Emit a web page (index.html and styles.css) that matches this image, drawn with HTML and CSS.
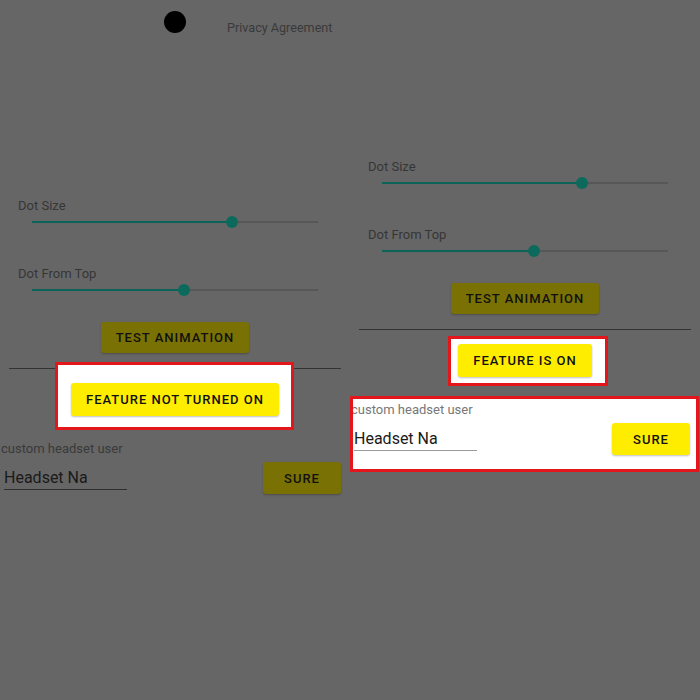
FILE: index.html
```html
<!DOCTYPE html>
<html lang="en">
<head>
    <meta charset="UTF-8">
    <meta name="viewport" content="width=device-width, initial-scale=1.0">
    <title>Headset Feature Comparison</title>
    <link rel="stylesheet" href="styles.css">
</head>
<body>
    <div class="screens">
        <!-- left: feature off -->
        <div class="panel">
            <div class="header">
                <span class="dot"></span>
                <span class="privacy">Privacy Agreement</span>
            </div>

            <div class="label">Dot Size</div>
            <div class="slider">
                <div class="track"><div class="fill" style="width: 70%"><span class="thumb"></span></div></div>
            </div>
            <div class="label label-gap">Dot From Top</div>
            <div class="slider">
                <div class="track"><div class="fill" style="width: 53%"><span class="thumb"></span></div></div>
            </div>

            <div class="btn-row">
                <button class="btn btn-dim">Test Animation</button>
            </div>
            <div class="divider"></div>

            <div class="feature-row">
                <div class="highlight hl-off">
                    <button class="btn btn-yellow">Feature Not Turned On</button>
                </div>
            </div>

            <div class="custom">
                <div class="small-label">custom headset user</div>
                <div class="input-row">
                    <input class="name-input" type="text" value="Headset Na">
                    <button class="btn btn-dim btn-sure">Sure</button>
                </div>
            </div>
        </div>

        <!-- right: feature on -->
        <div class="panel panel-on">
            <div class="label">Dot Size</div>
            <div class="slider">
                <div class="track"><div class="fill" style="width: 70%"><span class="thumb"></span></div></div>
            </div>
            <div class="label label-gap">Dot From Top</div>
            <div class="slider">
                <div class="track"><div class="fill" style="width: 53%"><span class="thumb"></span></div></div>
            </div>

            <div class="btn-row">
                <button class="btn btn-dim">Test Animation</button>
            </div>
            <div class="divider"></div>

            <div class="feature-row">
                <div class="highlight hl-on">
                    <button class="btn btn-yellow">Feature Is On</button>
                </div>
            </div>

            <div class="custom highlight hl-custom">
                <div class="small-label">custom headset user</div>
                <div class="input-row">
                    <input class="name-input" type="text" value="Headset Na">
                    <button class="btn btn-yellow btn-sure">Sure</button>
                </div>
            </div>
        </div>
    </div>
</body>
</html>
```

FILE: styles.css
```css
html, body {
    margin: 0;
    height: 100%;
}
body {
    background-color: #666666;
    font-family: Roboto, 'Liberation Sans', sans-serif;
    color: #363636;
    overflow: hidden;
}
.screens {
    display: flex;
    width: 700px;
}
.panel {
    width: 350px;
    flex: none;
}
.panel-on {
    padding-top: 158px;
}
.header {
    display: flex;
    align-items: flex-start;
    padding: 11px 0 0 164px;
    height: 22px;
    margin-bottom: 164px;
}
.dot {
    width: 22px;
    height: 22px;
    border-radius: 50%;
    background-color: #000;
}
.privacy {
    margin: 9px 0 0 41px;
    font-size: 12.6px;
    line-height: 16px;
    color: #3a3a3a;
}
.label {
    padding-left: 18px;
    font-size: 13px;
    line-height: 18px;
}
.label-gap {
    margin-top: 36px;
}
.slider {
    margin: 0 32px;
    height: 14px;
    display: flex;
    align-items: center;
}
.track {
    flex: 1;
    height: 2px;
    background-color: #575757;
}
.fill {
    position: relative;
    height: 100%;
    background-color: #0b6457;
}
.thumb {
    position: absolute;
    right: -6px;
    top: -5px;
    width: 12px;
    height: 12px;
    border-radius: 50%;
    background-color: #0c6a5c;
}
.btn-row,
.feature-row {
    display: flex;
    justify-content: center;
}
.btn-row {
    margin-top: 25px;
}
.btn {
    font-family: Roboto, 'Liberation Sans', sans-serif;
    font-size: 13px;
    font-weight: 500;
    letter-spacing: 1px;
    text-transform: uppercase;
    color: #111;
    border: none;
    border-radius: 3px;
    height: 31px;
    padding: 0 15px;
    cursor: pointer;
}
.btn-dim {
    background-color: #7a7104;
    box-shadow: 0 1px 2px rgba(0, 0, 0, 0.25);
}
.btn-yellow {
    background-color: #ffed00;
    box-shadow: 0 1px 2px rgba(0, 0, 0, 0.25);
}
.feature-row .btn {
    height: 33px;
}
.divider {
    margin: 15px 9px 0;
    height: 1px;
    background-color: #333;
}
.feature-row {
    margin-top: 14px;
}
.highlight {
    position: relative;
    background-color: #fff;
}
.highlight::after {
    content: "";
    position: absolute;
    inset: 0;
    border: 3px solid #e3161b;
    pointer-events: none;
}
.hl-off {
    margin: -21px -15px -14px -16px;
    padding: 21px 15px 14px 16px;
}
.hl-on {
    margin: -8px -16px -9px -10px;
    padding: 8px 16px 9px 10px;
}
.custom {
    margin-top: 24px;
}
.hl-custom {
    margin-top: 19px;
    margin-right: 1px;
    padding: 5px 0 17px;
}
.small-label {
    padding-left: 1px;
    font-size: 13px;
    line-height: 18px;
    color: #3a3a3a;
}
.hl-custom .small-label {
    color: #777;
}
.input-row {
    display: flex;
    align-items: flex-start;
    margin-top: 4px;
}
.name-input {
    width: 123px;
    margin: 0 0 0 4px;
    padding: 6px 0 1px;
    border: none;
    border-bottom: 1px solid #2e2e2e;
    background: transparent;
    font-family: Roboto, 'Liberation Sans', sans-serif;
    font-size: 16px;
    line-height: 20px;
    color: #1a1a1a;
    outline: none;
}
.hl-custom .name-input {
    border-bottom-color: #999;
}
.btn-sure {
    margin-left: auto;
    margin-right: 9px;
    width: 78px;
    height: 32px;
    padding: 0;
}
```
